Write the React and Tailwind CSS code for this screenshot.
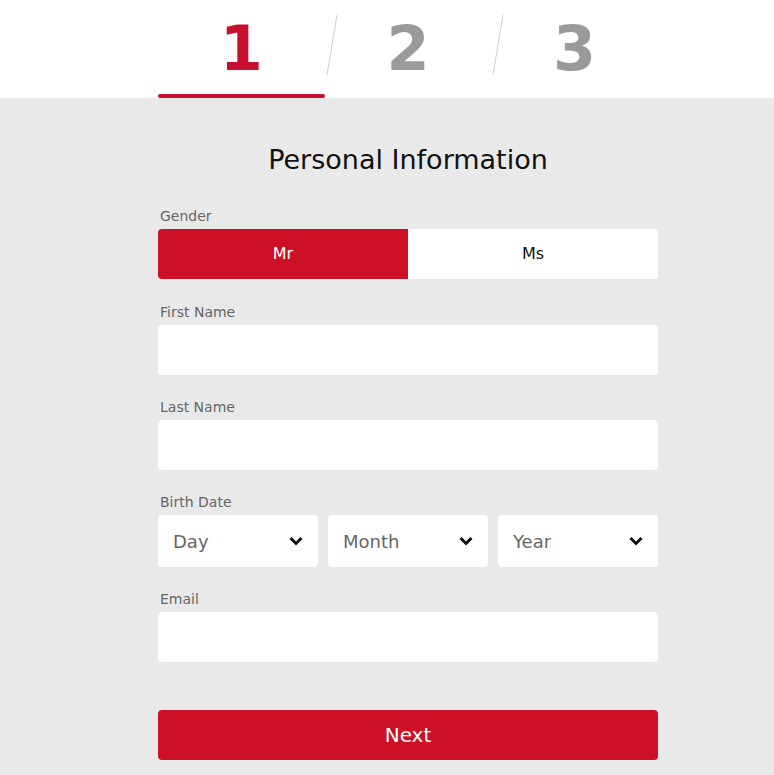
import React, { useState } from 'react';

const font = { fontFamily: 'Tahoma, "DejaVu Sans", sans-serif' };

const Chevron = () => (
  <svg width="14" height="10" viewBox="0 0 14 10" className="shrink-0">
    <polyline points="1.5,2 7,7.5 12.5,2" fill="none" stroke="#111" strokeWidth="3" />
  </svg>
);

const Slash = () => (
  <div className="relative w-0">
    <svg width="12" height="62" viewBox="0 0 12 62" className="absolute left-[1px] top-[14px]">
      <line x1="11" y1="1" x2="1" y2="61" stroke="#d0d0d0" strokeWidth="1" />
    </svg>
  </div>
);

const Field = ({ label, children, className = 'mb-[23px]' }) => (
  <div className={className}>
    <label className="block text-[14px] leading-[18px] mb-[4px] pl-[2px] text-[#666]">{label}</label>
    {children}
  </div>
);

const Select = ({ label }) => (
  <div className="flex-1 h-[52px] bg-white rounded-[4px] flex items-center justify-between pl-[15px] pr-[15px]">
    <span className="text-[18px] text-[#666]">{label}</span>
    <Chevron />
  </div>
);

const App = () => {
  const [gender, setGender] = useState('mr');
  const [step] = useState(1);

  return (
    <div className="min-h-screen bg-[#e9e9e9]" style={font}>
      <div className="bg-white h-[98px] pl-[158px]">
        <div className="w-[500px] h-full flex">
          {[1, 2, 3].map((n, i) => (
            <React.Fragment key={n}>
              {i > 0 && <Slash />}
              <div className="flex-1 flex flex-col items-center">
                <div
                  className={`h-[94px] pt-[9px] text-[62px] leading-[80px] font-bold ${n === step ? 'text-[#c8102e]' : 'text-[#9a9a9a]'}`}
                >
                  {n}
                </div>
                {n === step && <div className="w-full h-[4px] rounded-full bg-[#c8102e]" />}
              </div>
            </React.Fragment>
          ))}
        </div>
      </div>

      <div className="pl-[158px] pt-[43px] pb-[15px]">
        <div className="w-[500px]">
          <h1 className="text-center text-[27px] leading-[38px] text-[#111] mb-[28px]">Personal Information</h1>

          <Field label="Gender" className="mb-[24px]">
            <div className="flex h-[50px] rounded-[4px] overflow-hidden bg-white">
              <button
                onClick={() => setGender('mr')}
                className={`flex-1 text-[16px] ${gender === 'mr' ? 'bg-[#cc1126] text-white' : 'bg-white text-[#111]'}`}
              >
                Mr
              </button>
              <button
                onClick={() => setGender('ms')}
                className={`flex-1 text-[16px] ${gender === 'ms' ? 'bg-[#cc1126] text-white' : 'bg-white text-[#111]'}`}
              >
                Ms
              </button>
            </div>
          </Field>

          <Field label="First Name">
            <input className="w-full h-[50px] bg-white rounded-[4px] px-[15px] outline-none" />
          </Field>

          <Field label="Last Name">
            <input className="w-full h-[50px] bg-white rounded-[4px] px-[15px] outline-none" />
          </Field>

          <Field label="Birth Date">
            <div className="flex gap-[10px]">
              <Select label="Day" />
              <Select label="Month" />
              <Select label="Year" />
            </div>
          </Field>

          <Field label="Email">
            <input className="w-full h-[50px] bg-white rounded-[4px] px-[15px] outline-none" />
          </Field>

          <button className="mt-[25px] w-full h-[50px] rounded-[4px] bg-[#cc1126] text-white text-[20px]">Next</button>
        </div>
      </div>
    </div>
  );
};

export default App;
